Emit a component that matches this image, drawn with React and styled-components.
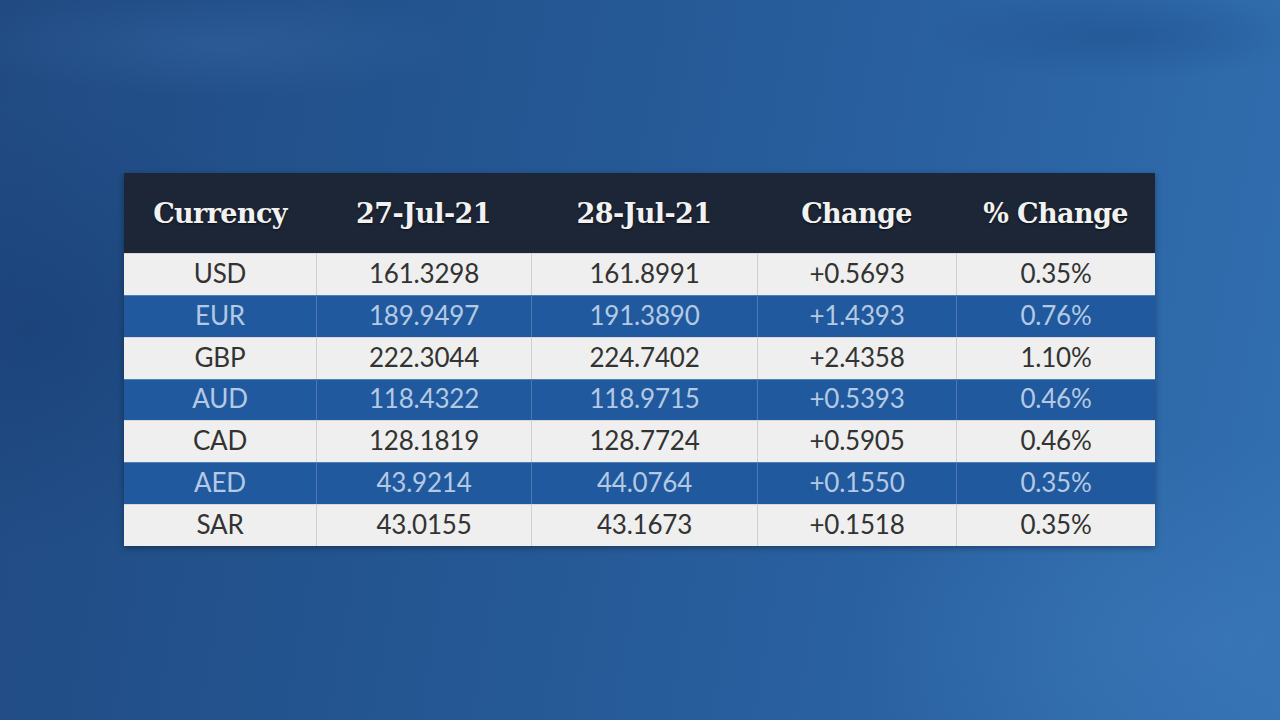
import React from "react";
import styled, { createGlobalStyle } from "styled-components";

const GlobalStyle = createGlobalStyle`
  html, body {
    margin: 0;
    padding: 0;
    width: 1280px;
    height: 720px;
    overflow: hidden;
  }
`;

const Page = styled.div`
  width: 1280px;
  height: 720px;
  box-sizing: border-box;
  padding: 173px 125px 0 124px;
  background:
    radial-gradient(ellipse 340px 70px at 220px 45px, rgba(60, 110, 170, 0.35), transparent 75%),
    radial-gradient(ellipse 260px 60px at 1120px 35px, rgba(28, 75, 135, 0.45), transparent 75%),
    radial-gradient(ellipse 520px 280px at 1220px 640px, rgba(65, 125, 190, 0.45), transparent 70%),
    radial-gradient(ellipse 380px 320px at 40px 330px, rgba(22, 58, 112, 0.45), transparent 70%),
    linear-gradient(100deg, #214a82 0%, #245793 40%, #2a61a1 70%, #3270b1 100%);
`;

const Table = styled.div`
  display: grid;
  grid-template-columns: 192px 215px 226px 199px 199px;
  grid-template-rows: 80px repeat(7, 41.85px);
  box-shadow: 0 2px 6px rgba(0, 0, 0, 0.35);
`;

const HeadCell = styled.div`
  background: #1d2636;
  color: #f2f2f2;
  font-family: "DejaVu Serif", "Liberation Serif", serif;
  font-weight: bold;
  font-size: 27px;
  letter-spacing: -0.6px;
  display: flex;
  align-items: center;
  justify-content: center;
  text-shadow: 0 1px 2px rgba(0, 0, 0, 0.6);
`;

const Cell = styled.div`
  box-sizing: border-box;
  display: flex;
  align-items: center;
  justify-content: center;
  padding-bottom: 3px;
  font-family: Lato, "Open Sans", sans-serif;
  font-size: 26px;
  letter-spacing: -0.2px;
  background: ${(p) => (p.$blue ? "#20599d" : "#efefef")};
  color: ${(p) => (p.$blue ? "#b4c9e4" : "#333333")};
  border-left: ${(p) =>
    p.$first ? "none" : p.$blue ? "1px solid #4a7bb3" : "1px solid #cfcfcf"};
  border-top: 1px solid ${(p) => (p.$blue ? "#4e80b8" : "#d8d8d8")};
`;

const headers = ["Currency", "27-Jul-21", "28-Jul-21", "Change", "% Change"];

const rows = [
  ["USD", "161.3298", "161.8991", "+0.5693", "0.35%"],
  ["EUR", "189.9497", "191.3890", "+1.4393", "0.76%"],
  ["GBP", "222.3044", "224.7402", "+2.4358", "1.10%"],
  ["AUD", "118.4322", "118.9715", "+0.5393", "0.46%"],
  ["CAD", "128.1819", "128.7724", "+0.5905", "0.46%"],
  ["AED", "43.9214", "44.0764", "+0.1550", "0.35%"],
  ["SAR", "43.0155", "43.1673", "+0.1518", "0.35%"],
];

const App = () => {
  return (
    <Page>
      <GlobalStyle />
      <Table>
        {headers.map((h) => (
          <HeadCell key={h}>{h}</HeadCell>
        ))}
        {rows.map((row, i) =>
          row.map((value, j) => (
            <Cell key={`${i}-${j}`} $blue={i % 2 === 1} $first={j === 0}>
              {value}
            </Cell>
          ))
        )}
      </Table>
    </Page>
  );
};

export default App;
